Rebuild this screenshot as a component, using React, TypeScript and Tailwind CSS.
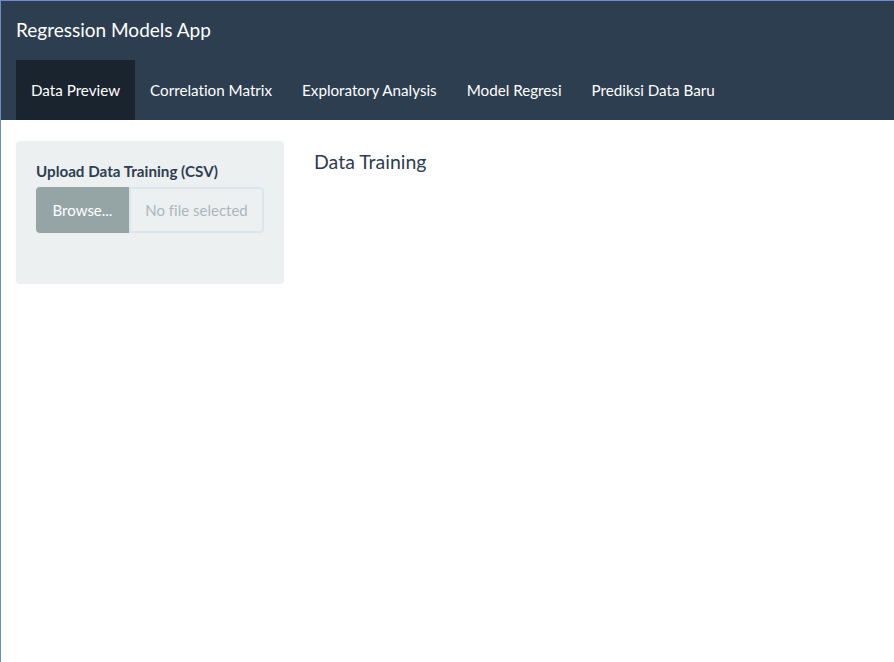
const tabs = ["Data Preview", "Correlation Matrix", "Exploratory Analysis", "Model Regresi", "Prediksi Data Baru"];

function Navbar({ active }: { active: number }) {
    return (
        <div className="bg-[#2c3e50] pl-[15px]">
            <div className="h-[59px] flex items-center text-[19px] text-white">Regression Models App</div>
            <ul className="flex h-[60px]">
                {tabs.map((tab, i) => (
                    <li
                        key={tab}
                        className={
                            "flex items-center px-[15px] pt-[1px] text-[15.2px] text-white " +
                            (i === active ? "bg-[#1a242f]" : "")
                        }
                    >
                        {tab}
                    </li>
                ))}
            </ul>
        </div>
    );
}

function FileUpload() {
    return (
        <div className="bg-[#ecf0f1] rounded-[4px] w-[268px] h-[143px] pt-[20px] px-[20px]">
            <label className="block font-bold text-[15.2px] leading-[21px] text-[#2c3e50] mb-[5px]">
                Upload Data Training (CSV)
            </label>
            <div className="flex h-[46px]">
                <div className="w-[93px] bg-[#95a5a6] text-white text-[15px] flex items-center justify-center rounded-l-[4px]">
                    Browse...
                </div>
                <div className="w-[135px] border-2 border-[#dce4ec] rounded-r-[4px] flex items-center justify-center text-[15px] text-[#acb6c0]">
                    No file selected
                </div>
            </div>
        </div>
    );
}

export default function App() {
    return (
        <div
            className="w-[894px] h-[662px] overflow-hidden bg-white border-t border-l border-[#6f8cc8] text-[#2c3e50] [font-variant-ligatures:none]"
            style={{ fontFamily: "Lato, 'Liberation Sans', sans-serif" }}
        >
            <Navbar active={0} />
            <div className="flex pt-[21px] pl-[15px]">
                <FileUpload />
                <div className="pl-[30px] pt-[8px]">
                    <h4 className="text-[19.5px] leading-[26px]">Data Training</h4>
                </div>
            </div>
        </div>
    );
}
